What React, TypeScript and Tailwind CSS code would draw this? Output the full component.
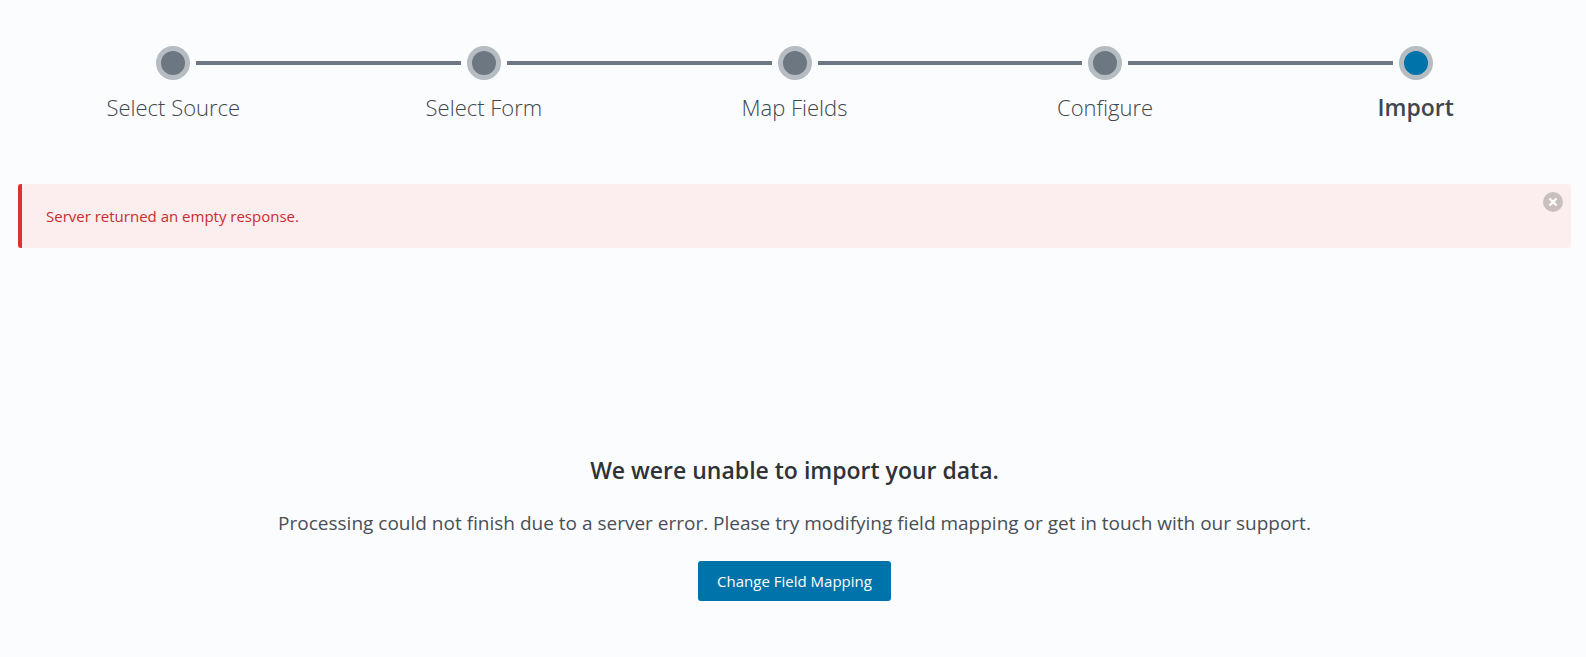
import React from "react"
import clsx from "clsx"

interface Step {
  id: string
  label: string
}

interface StepperProps {
  steps: Step[]
  currentStep: string
}

interface AlertProps {
  message: string
  onDismiss: () => void
}

const STEPS: Step[] = [
  { id: "source", label: "Select Source" },
  { id: "form", label: "Select Form" },
  { id: "map", label: "Map Fields" },
  { id: "configure", label: "Configure" },
  { id: "import", label: "Import" }
]

function Stepper({ steps, currentStep }: StepperProps) {
  return (
    <ol className="grid grid-cols-5">
      {steps.map((step, index) => {
        const isCurrent = step.id === currentStep
        return (
          <li key={step.id} aria-current={isCurrent ? "step" : undefined}>
            {/* Dot with half a connector on each side */}
            <div className="flex items-center gap-1.5">
              <span className={clsx("h-1 flex-1", index > 0 && "bg-[#6c7781]")} />
              <span
                className={clsx(
                  "h-[34px] w-[34px] rounded-full border-5 border-[#b5bcc2]",
                  isCurrent ? "bg-[#0073aa]" : "bg-[#6c7781]"
                )}
              />
              <span className={clsx("h-1 flex-1", index < steps.length - 1 && "bg-[#6c7781]")} />
            </div>
            <p
              className={clsx(
                "mt-[11px] text-center leading-8 text-[#40464d]",
                isCurrent ? "text-[23px] font-semibold" : "text-[22px] font-light"
              )}
            >
              {step.label}
            </p>
          </li>
        )
      })}
    </ol>
  )
}

function Alert({ message, onDismiss }: AlertProps) {
  return (
    <div
      role="alert"
      className="flex items-start justify-between rounded-[3px] border-l-4 border-[#dc3232] bg-[#fceeee] pr-2"
    >
      <p className="py-5 pl-6 text-[15px] leading-6 text-[#c92c2c]">{message}</p>
      <button
        type="button"
        aria-label="Dismiss"
        onClick={onDismiss}
        className="mt-2 flex h-5 w-5 items-center justify-center rounded-full bg-[#cabfbf]"
      >
        <svg viewBox="0 0 10 10" className="h-2.5 w-2.5" fill="none" stroke="#fff" strokeWidth="2.4">
          <path d="M1.5 1.5 8.5 8.5M8.5 1.5 1.5 8.5" />
        </svg>
      </button>
    </div>
  )
}

export default function App() {
  const [showAlert, setShowAlert] = React.useState(true)

  return (
    <main className="min-h-screen bg-[#fbfcfe] pt-[46px] pr-[15px] pb-14 pl-[18px] font-['Open_Sans','Noto_Sans',sans-serif]">
      <Stepper steps={STEPS} currentStep="import" />

      <div className="mt-[61px] min-h-16">
        {showAlert && (
          <Alert message="Server returned an empty response." onDismiss={() => setShowAlert(false)} />
        )}
      </div>

      {/* Import result */}
      <section className="mt-[206px] flex flex-col items-center text-center">
        <h2 className="text-[23px] leading-8 font-semibold text-[#2e3338]">We were unable to import your data.</h2>
        <p className="mt-[21px] text-[19px] leading-8 text-[#484f56]">
          Processing could not finish due to a server error. Please try modifying field mapping or get in touch with our
          support.
        </p>
        <button
          type="button"
          className="mt-[22px] h-10 rounded-[3px] bg-[#0073aa] px-[19px] text-[15px] leading-6 text-white"
        >
          Change Field Mapping
        </button>
      </section>
    </main>
  )
}
